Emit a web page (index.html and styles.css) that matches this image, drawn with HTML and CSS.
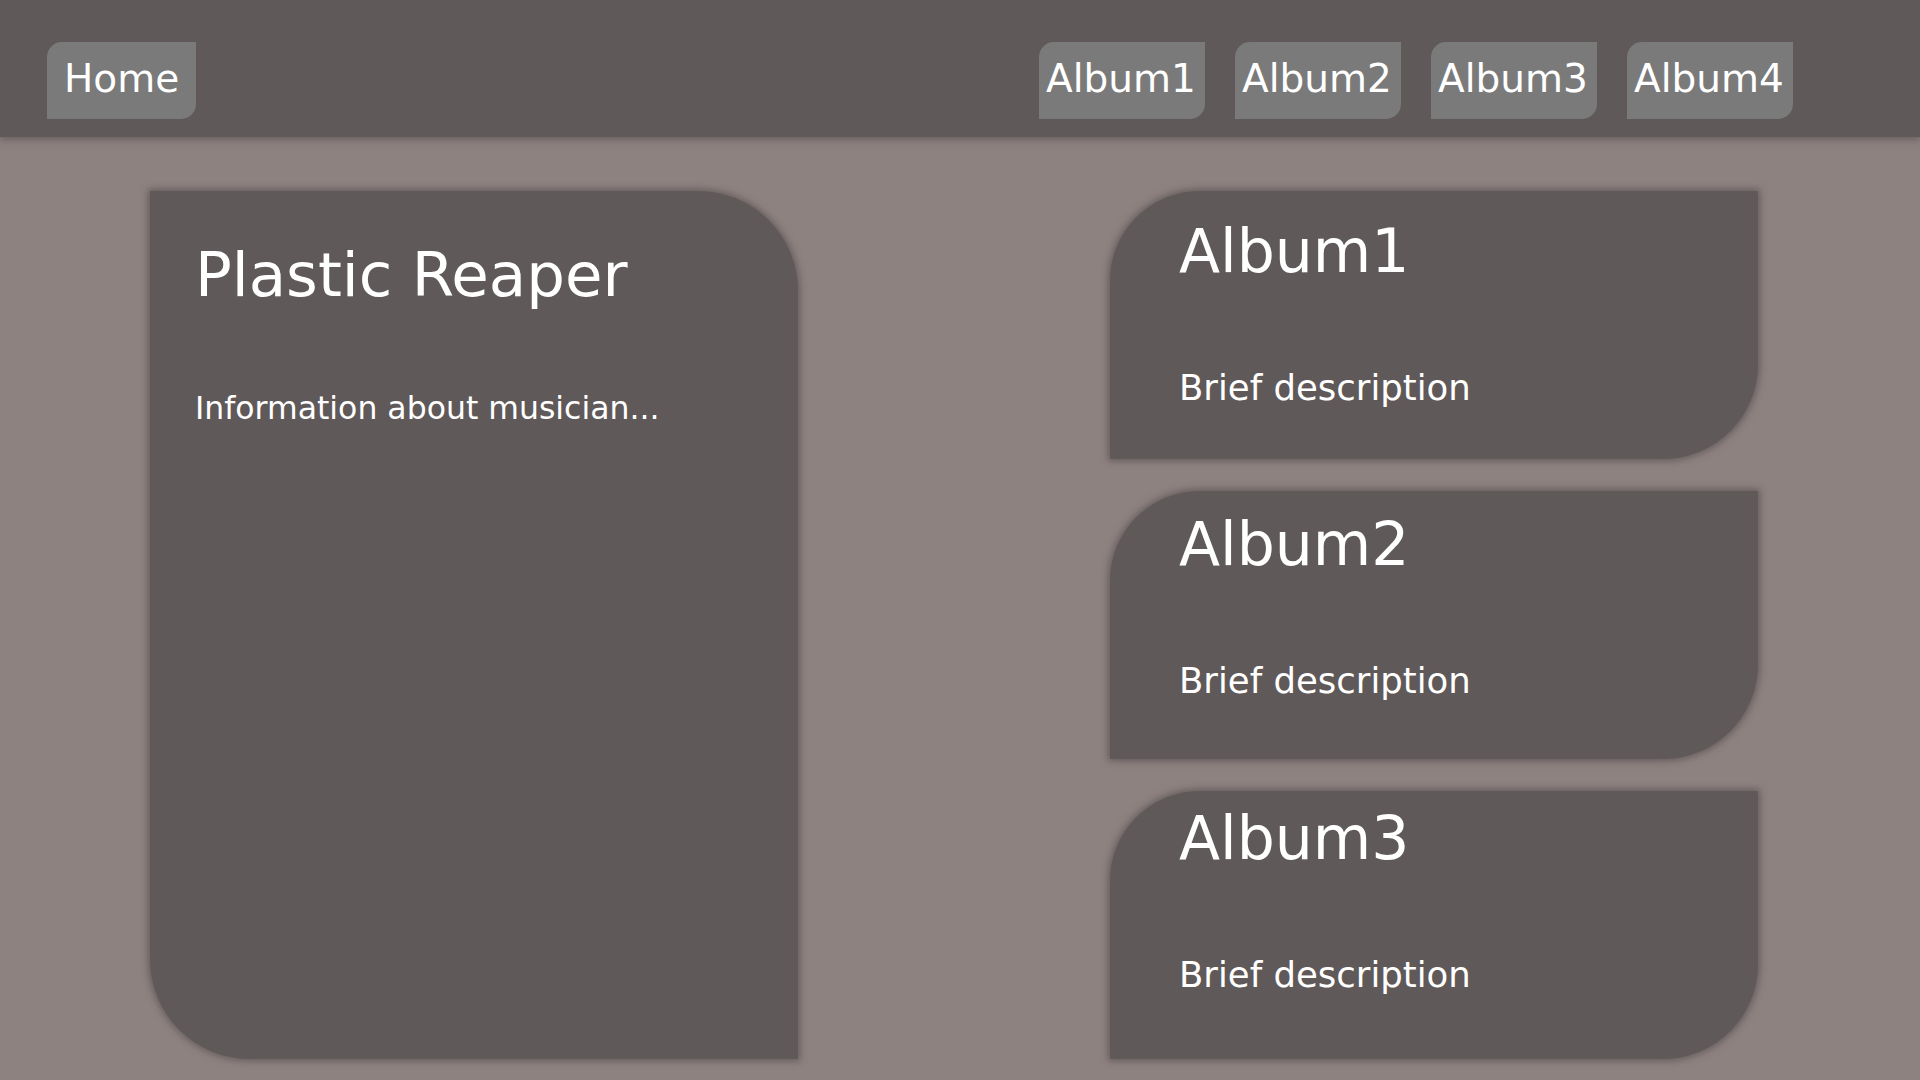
FILE: index.html
```html
<!DOCTYPE html>
<html lang="en">
<head>
<meta charset="utf-8">
<title>Plastic Reaper</title>
<link rel="stylesheet" href="styles.css">
</head>
<body>
<header class="topbar">
  <a class="navbtn home" href="#">Home</a>
  <nav class="albums">
    <a class="navbtn album" href="#">Album1</a>
    <a class="navbtn album" href="#">Album2</a>
    <a class="navbtn album" href="#">Album3</a>
    <a class="navbtn album" href="#">Album4</a>
  </nav>
</header>
<main class="content">
  <section class="col">
    <div class="artist-card">
      <h1 class="artist-name">Plastic Reaper</h1>
      <p class="artist-info">Information about musician...</p>
    </div>
  </section>
  <section class="col album-list">
    <div class="album-card">
      <h2 class="album-title">Album1</h2>
      <p class="album-desc">Brief description</p>
    </div>
    <div class="album-card">
      <h2 class="album-title">Album2</h2>
      <p class="album-desc">Brief description</p>
    </div>
    <div class="album-card">
      <h2 class="album-title">Album3</h2>
      <p class="album-desc">Brief description</p>
    </div>
  </section>
</main>
</body>
</html>
```
FILE: styles.css
```css
* { box-sizing: border-box; }

html, body {
  margin: 0;
  padding: 0;
  height: 100%;
  overflow: hidden;
}

body {
  background: #8e8281;
  font-family: "DejaVu Sans", Verdana, sans-serif;
  color: #ffffff;
}

.topbar {
  height: 137px;
  background: #5f5959;
  display: flex;
  justify-content: space-between;
  align-items: flex-start;
  padding: 42px 127px 0 47px;
  box-shadow: 0 0 9px 1px rgba(85, 78, 78, 0.9);
  position: relative;
  z-index: 1;
}

.albums {
  display: flex;
  gap: 30px;
}

.navbtn {
  display: block;
  background: #7a7a7a;
  color: #ffffff;
  text-decoration: none;
  font-size: 39px;
  line-height: 46px;
  height: 77px;
  padding-top: 14px;
  border-radius: 15px 0 15px 0;
}

.home {
  padding-left: 17px;
  padding-right: 17px;
}

.album {
  width: 166px;
  padding-left: 7px;
}

.content {
  display: grid;
  grid-template-columns: 960px 960px;
  margin-top: 54px;
}

.col {
  padding-left: 150px;
}

.artist-card {
  width: 648px;
  height: 868px;
  background: #5f5959;
  border-radius: 0 100px 0 100px;
  box-shadow: 0 0 7px 2px rgba(90, 82, 82, 0.8);
  padding: 48px 0 0 45px;
}

.artist-name {
  margin: 0;
  font-size: 61px;
  font-weight: normal;
  line-height: normal;
}

.artist-info {
  margin: 80px 0 0 0;
  font-size: 31.5px;
  line-height: normal;
}

.album-list {
  display: flex;
  flex-direction: column;
  gap: 32px;
}

.album-card {
  width: 648px;
  height: 268px;
  background: #5f5959;
  border-radius: 90px 0 95px 0;
  box-shadow: 0 0 7px 2px rgba(90, 82, 82, 0.8);
  padding: 25px 0 0 69px;
}

.album-card:nth-child(2) {
  padding-top: 18px;
}

.album-card:nth-child(3) {
  padding-top: 12px;
}

.album-title {
  margin: 0;
  font-size: 60px;
  font-weight: normal;
  line-height: normal;
}

.album-desc {
  margin: 81px 0 0 0;
  font-size: 35.5px;
  line-height: normal;
}
```
